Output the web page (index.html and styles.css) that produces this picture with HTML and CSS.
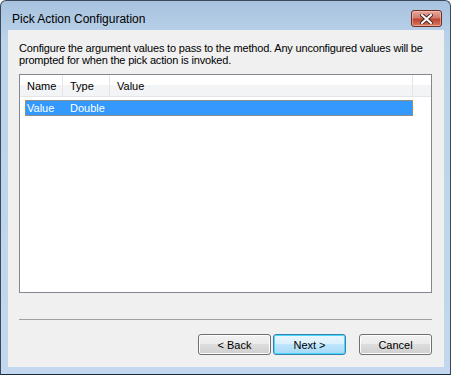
FILE: index.html
```html
<!DOCTYPE html>
<html lang="en">
<head>
    <meta charset="UTF-8" />
    <meta name="viewport" content="width=device-width, initial-scale=1.0" />
    <title>Pick Action Configuration</title>
    <link rel="stylesheet" href="styles.css">
</head>
<body>
    <div class="window">
        <div class="titlebar">
            <span class="title">Pick Action Configuration</span>
            <button class="btn-close" title="Close">
                <svg width="13" height="10" viewBox="0 0 13 10">
                    <path d="M2 1 L11 9 M11 1 L2 9" stroke="#4a2a26" stroke-width="4" stroke-linecap="square" />
                    <path d="M2 1 L11 9 M11 1 L2 9" stroke="#ffffff" stroke-width="2" stroke-linecap="square" />
                </svg>
            </button>
        </div>

        <div class="client">
            <p class="intro">Configure the argument values to pass to the method. Any unconfigured values will be<br>prompted for when the pick action is invoked.</p>

            <div class="listview">
                <div class="lv-header">
                    <div class="col col-name">Name</div>
                    <div class="col col-type">Type</div>
                    <div class="col col-value">Value</div>
                    <div class="col col-fill"></div>
                </div>
                <div class="lv-row selected">
                    <div class="cell cell-name">Value</div>
                    <div class="cell cell-type">Double</div>
                    <div class="cell cell-value"></div>
                </div>
            </div>

            <div class="separator"></div>

            <div class="buttons">
                <button class="btn">&lt; Back</button>
                <button class="btn btn-default">Next &gt;</button>
                <button class="btn btn-cancel">Cancel</button>
            </div>
        </div>
    </div>
</body>
</html>
```

FILE: styles.css
```css
* {
    box-sizing: border-box;
}

body {
    margin: 0;
    background-color: #ffffff;
    font-family: "Liberation Sans", Arial, sans-serif;
    font-size: 11px;
    color: #000;
}

.window {
    width: 451px;
    height: 375px;
    border: 1px solid #3a4a5c;
    border-bottom-color: #1c2a38;
    border-radius: 6px 6px 0 0;
    background: linear-gradient(#a8c3df, #bcd3ea 40px, #c3d8ee);
    display: flex;
    flex-direction: column;
    padding: 0 6px 7px 7px;
}

.titlebar {
    height: 29px;
    display: flex;
    align-items: flex-start;
    justify-content: space-between;
}

.title {
    font-size: 12px;
    margin: 11px 0 0 4px;
    color: #000;
}

.btn-close {
    margin-top: 9px;
    margin-right: 2px;
    width: 31px;
    height: 17px;
    border: 1px solid #6b2e25;
    border-radius: 3px;
    background: linear-gradient(#e6a89c, #d27d6d 45%, #c0432f 55%, #d57b62);
    display: flex;
    align-items: center;
    justify-content: center;
    padding: 0;
    box-shadow: inset 0 0 0 1px rgba(255, 210, 200, 0.5);
}

.client {
    flex: 1;
    background-color: #f0f0f0;
    padding: 12px 11px 0 11px;
    display: flex;
    flex-direction: column;
}

.intro {
    margin: 0 0 8px;
    line-height: 12px;
    letter-spacing: -0.18px;
    white-space: nowrap;
}

.listview {
    height: 219px;
    width: 413px;
    border: 1px solid #828790;
    background-color: #fff;
}

.lv-header {
    display: flex;
    height: 22px;
    background: linear-gradient(#ffffff 50%, #f3f4f6 50%);
    border-bottom: 1px solid #e3e5e8;
}

.col {
    padding: 5px 0 0 7px;
    border-right: 1px solid #e3e5e8;
    height: 21px;
}

.col-name { width: 43px; }
.col-type { width: 47px; }
.col-value { width: 303px; }
.col-fill { flex: 1; border-right: none; }

.lv-row {
    display: flex;
    height: 16px;
    margin: 3px 0 0 5px;
    width: 388px;
}

.lv-row.selected {
    background-color: #3399ff;
    color: #fff;
    outline: 1px dotted #e0861c;
    outline-offset: -1px;
}

.cell {
    padding: 2px 0 0 2px;
}

.cell-name { width: 43px; }
.cell-type { width: 47px; }

.separator {
    margin-top: 26px;
    width: 413px;
    height: 1px;
    background-color: #a0a0a0;
}

.buttons {
    display: flex;
    justify-content: flex-end;
    gap: 2px;
    margin-top: 14px;
    width: 413px;
}

.btn {
    width: 73px;
    height: 21px;
    font-family: inherit;
    font-size: 11px;
    padding: 0;
    border: 1px solid #707070;
    border-radius: 3px;
    background: linear-gradient(#f2f2f2, #ebebeb 50%, #dddddd 50%, #cfcfcf);
    box-shadow: inset 0 0 0 1px #fcfcfc;
    color: #000;
}

.btn-default {
    border-color: #3c7fb1;
    background: linear-gradient(#eaf6fd, #d9f0fc 50%, #bee6fd 50%, #a7d9f5);
    box-shadow: inset 0 0 0 1px #48d8fb;
}

.btn-cancel {
    margin-left: 11px;
}
```
